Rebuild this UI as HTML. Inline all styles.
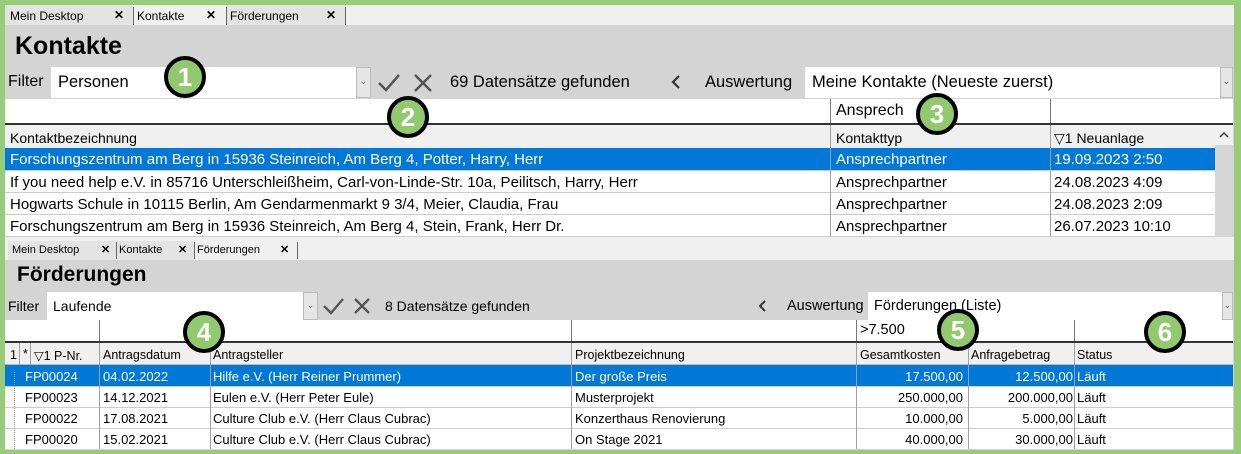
<!DOCTYPE html>
<html><head><meta charset="utf-8"><style>
*{margin:0;padding:0;box-sizing:border-box}
body{width:1241px;height:454px;overflow:hidden;background:#97cc78;font-family:"Liberation Sans",sans-serif;position:relative}
.a{position:absolute;white-space:nowrap}
.t{position:absolute;white-space:nowrap;color:#000}
.badge{position:absolute;width:42px;height:42px;border-radius:50%;background:#92c96f;border:4px solid #000;color:#fff;font-weight:bold;font-size:26px;line-height:34px;text-align:center}
</style></head><body>
<div class="a" style="left:5px;top:5px;width:1229px;height:444px;background:#d4d4d4"></div>
<div class="a" style="left:5px;top:5px;width:1229px;height:20px;background:#f0f0f0"></div>
<div class="a" style="left:5px;top:5px;width:128px;height:20px;background:#e3e3e3"></div>
<div class="a" style="left:226px;top:5px;width:119px;height:20px;background:#e3e3e3"></div>
<div class="a" style="left:133px;top:7px;width:1px;height:18px;background:#666"></div>
<div class="a" style="left:226px;top:7px;width:1px;height:18px;background:#666"></div>
<div class="a" style="left:345px;top:7px;width:1px;height:18px;background:#666"></div>
<div class="t" style="left:10px;top:9px;font-size:12px">Mein Desktop</div>
<div class="t" style="left:114px;top:8px;font-size:12px;font-weight:bold">✕</div>
<div class="t" style="left:137px;top:9px;font-size:12px">Kontakte</div>
<div class="t" style="left:206px;top:8px;font-size:12px;font-weight:bold">✕</div>
<div class="t" style="left:230px;top:9px;font-size:12px">Förderungen</div>
<div class="t" style="left:326px;top:8px;font-size:12px;font-weight:bold">✕</div>
<div class="t" style="left:15px;top:32px;font-size:25px;font-weight:bold">Kontakte</div>
<div class="t" style="left:8px;top:73px;font-size:16px">Filter</div>
<div class="a" style="left:51px;top:67px;width:306px;height:31px;background:#fff"></div>
<div class="t" style="left:58px;top:73px;font-size:16.5px">Personen</div>
<div class="a" style="left:356px;top:67px;width:15px;height:31px;background:#e5e5e5;border:1px solid #bbb;font-size:10px;color:#777;text-align:center;line-height:28px">⌄</div>
<svg class="a" style="left:377px;top:72px" width="60" height="22"><path d="M2 11 L9 18 L22 3" stroke="#555" stroke-width="2.5" fill="none"/><path d="M38 3 L54 19 M54 3 L38 19" stroke="#555" stroke-width="2.5"/></svg>
<div class="t" style="left:450px;top:73px;font-size:16.5px">69 Datensätze gefunden</div>
<svg class="a" style="left:670px;top:74px" width="12" height="16"><path d="M9 2 L3 8 L9 14" stroke="#333" stroke-width="2.2" fill="none"/></svg>
<div class="t" style="left:705px;top:73px;font-size:16.5px">Auswertung</div>
<div class="a" style="left:805px;top:67px;width:415px;height:31px;background:#fff"></div>
<div class="t" style="left:812px;top:73px;font-size:16.5px">Meine Kontakte (Neueste zuerst)</div>
<div class="a" style="left:1220px;top:67px;width:13px;height:31px;background:#e5e5e5;border:1px solid #bbb;font-size:10px;color:#777;text-align:center;line-height:28px">⌄</div>
<div class="a" style="left:5px;top:99px;width:1228px;height:24px;background:#fff"></div>
<div class="a" style="left:830px;top:99px;width:1px;height:24px;background:#777"></div>
<div class="a" style="left:1050px;top:99px;width:1px;height:24px;background:#777"></div>
<div class="t" style="left:836px;top:102px;font-size:16px">Ansprech</div>
<div class="a" style="left:5px;top:123px;width:1228px;height:2px;background:#333"></div>
<div class="a" style="left:5px;top:125px;width:1210px;height:24px;background:#f0f0f0;border-bottom:1px solid #bbb"></div>
<div class="a" style="left:830px;top:125px;width:1px;height:112px;background:#a0a0a0"></div>
<div class="a" style="left:1050px;top:125px;width:1px;height:112px;background:#a0a0a0"></div>
<div class="t" style="left:10px;top:130px;font-size:14px">Kontaktbezeichnung</div>
<div class="t" style="left:836px;top:130px;font-size:14px">Kontakttyp</div>
<div class="t" style="left:1054px;top:130px;font-size:14px">▽1 Neuanlage</div>
<div class="a" style="left:1215px;top:125px;width:18px;height:112px;background:#d6d6d6"></div>
<div class="a" style="left:1215px;top:125px;width:18px;height:20px;background:#f0f0f0"></div>
<svg class="a" style="left:1219px;top:131px" width="10" height="8"><path d="M1 6 L5 2 L9 6" stroke="#333" stroke-width="1.5" fill="none"/></svg>
<div class="a" style="left:5px;top:148px;width:1210px;height:88px;background:#fff"></div>
<div class="a" style="left:5px;top:148px;width:1210px;height:22px;background:#0078d7"></div>
<div class="a" style="left:5px;top:192px;width:1210px;height:1px;background:#ccc"></div>
<div class="a" style="left:5px;top:214px;width:1210px;height:1px;background:#ccc"></div>
<div class="a" style="left:5px;top:170px;width:1210px;height:1px;background:#ccc"></div>
<div class="a" style="left:5px;top:236px;width:1210px;height:1px;background:#ccc"></div>
<div class="a" style="left:830px;top:148px;width:1px;height:88px;background:#a0a0a0"></div>
<div class="a" style="left:1050px;top:148px;width:1px;height:88px;background:#a0a0a0"></div>
<div style="font-size:15px">
<div class="t" style="left:10px;top:151px;color:#fff">Forschungszentrum am Berg in 15936 Steinreich, Am Berg 4, Potter, Harry, Herr</div>
<div class="t" style="left:836px;top:151px;color:#fff">Ansprechpartner</div>
<div class="t" style="left:1054px;top:151px;color:#fff">19.09.2023 2:50</div>
<div class="t" style="left:10px;top:174px">If you need help e.V. in 85716 Unterschleißheim, Carl-von-Linde-Str. 10a, Peilitsch, Harry, Herr</div>
<div class="t" style="left:836px;top:174px">Ansprechpartner</div>
<div class="t" style="left:1054px;top:174px">24.08.2023 4:09</div>
<div class="t" style="left:10px;top:196px">Hogwarts Schule in 10115 Berlin, Am Gendarmenmarkt 9 3/4, Meier, Claudia, Frau</div>
<div class="t" style="left:836px;top:196px">Ansprechpartner</div>
<div class="t" style="left:1054px;top:196px">24.08.2023 2:09</div>
<div class="t" style="left:10px;top:218px">Forschungszentrum am Berg in 15936 Steinreich, Am Berg 4, Stein, Frank, Herr Dr.</div>
<div class="t" style="left:836px;top:218px">Ansprechpartner</div>
<div class="t" style="left:1054px;top:218px">26.07.2023 10:10</div>
</div>
<div class="a" style="left:5px;top:237px;width:1229px;height:25px;background:#f0f0f0"></div>
<div class="a" style="left:8px;top:241px;width:108px;height:19px;background:#e3e3e3"></div>
<div class="a" style="left:116px;top:241px;width:78px;height:19px;background:#e3e3e3"></div>
<div class="a" style="left:116px;top:242px;width:1px;height:17px;background:#666"></div>
<div class="a" style="left:194px;top:242px;width:1px;height:17px;background:#666"></div>
<div class="a" style="left:297px;top:242px;width:1px;height:17px;background:#666"></div>
<div class="t" style="left:12px;top:244px;font-size:11px">Mein Desktop</div>
<div class="t" style="left:101px;top:243px;font-size:11px;font-weight:bold">✕</div>
<div class="t" style="left:119px;top:244px;font-size:11px">Kontakte</div>
<div class="t" style="left:178px;top:243px;font-size:11px;font-weight:bold">✕</div>
<div class="t" style="left:197px;top:244px;font-size:11px">Förderungen</div>
<div class="t" style="left:280px;top:243px;font-size:11px;font-weight:bold">✕</div>
<div class="a" style="left:5px;top:260px;width:1229px;height:190px;background:#d4d4d4"></div>
<div class="t" style="left:17px;top:263px;font-size:21px;font-weight:bold">Förderungen</div>
<div class="t" style="left:8px;top:298px;font-size:14px">Filter</div>
<div class="a" style="left:47px;top:292px;width:257px;height:28px;background:#fff"></div>
<div class="t" style="left:53px;top:298px;font-size:14px">Laufende</div>
<div class="a" style="left:303px;top:292px;width:15px;height:28px;background:#e5e5e5;border:1px solid #bbb;font-size:9px;color:#777;text-align:center;line-height:24px">⌄</div>
<svg class="a" style="left:323px;top:296px" width="52" height="20"><path d="M1 10 L8 17 L20 3" stroke="#555" stroke-width="2.3" fill="none"/><path d="M32 3 L46 17 M46 3 L32 17" stroke="#555" stroke-width="2.3"/></svg>
<div class="t" style="left:385px;top:298px;font-size:14px">8 Datensätze gefunden</div>
<svg class="a" style="left:757px;top:299px" width="10" height="14"><path d="M8 2 L3 7 L8 12" stroke="#333" stroke-width="2" fill="none"/></svg>
<div class="t" style="left:787px;top:298px;font-size:14.5px">Auswertung</div>
<div class="a" style="left:868px;top:292px;width:355px;height:28px;background:#fff"></div>
<div class="t" style="left:874px;top:298px;font-size:14.5px">Förderungen (Liste)</div>
<div class="a" style="left:1222px;top:292px;width:11px;height:28px;background:#e5e5e5;border:1px solid #bbb;font-size:9px;color:#777;text-align:center;line-height:24px">⌄</div>
<div class="a" style="left:5px;top:320px;width:1228px;height:21px;background:#fff"></div>
<div class="a" style="left:99px;top:320px;width:1px;height:21px;background:#777"></div>
<div class="a" style="left:571px;top:320px;width:1px;height:21px;background:#777"></div>
<div class="a" style="left:856px;top:320px;width:1px;height:21px;background:#777"></div>
<div class="a" style="left:1074px;top:320px;width:1px;height:21px;background:#777"></div>
<div class="t" style="left:860px;top:322px;font-size:14.5px">&gt;7.500</div>
<div class="a" style="left:5px;top:341px;width:1228px;height:2px;background:#333"></div>
<div class="a" style="left:5px;top:343px;width:1228px;height:22px;background:#f0f0f0;border-bottom:1px solid #bbb"></div>
<div class="a" style="left:5px;top:365px;width:1228px;height:84px;background:#fff"></div>
<div class="a" style="left:5px;top:365px;width:1228px;height:21px;background:#0078d7"></div>
<div class="a" style="left:5px;top:386px;width:1228px;height:1px;background:#ccc"></div>
<div class="a" style="left:5px;top:407px;width:1228px;height:1px;background:#ccc"></div>
<div class="a" style="left:5px;top:428px;width:1228px;height:1px;background:#ccc"></div>
<div class="a" style="left:19px;top:343px;width:1px;height:22px;background:#a0a0a0"></div>
<div class="a" style="left:30px;top:343px;width:1px;height:22px;background:#a0a0a0"></div>
<div class="a" style="left:99px;top:343px;width:1px;height:106px;background:#a0a0a0"></div>
<div class="a" style="left:210px;top:343px;width:1px;height:106px;background:#a0a0a0"></div>
<div class="a" style="left:571px;top:343px;width:1px;height:106px;background:#a0a0a0"></div>
<div class="a" style="left:856px;top:343px;width:1px;height:106px;background:#a0a0a0"></div>
<div class="a" style="left:968px;top:343px;width:1px;height:106px;background:#a0a0a0"></div>
<div class="a" style="left:1074px;top:343px;width:1px;height:106px;background:#a0a0a0"></div>
<div class="a" style="left:14px;top:372px;width:0;height:77px;border-left:1px dotted #999"></div>
<div style="font-size:12.5px">
<div class="t" style="left:10px;top:348px">1</div>
<div class="t" style="left:23px;top:347px">*</div>
<div class="t" style="left:34px;top:348px">▽1 P-Nr.</div>
<div class="t" style="left:103px;top:348px">Antragsdatum</div>
<div class="t" style="left:213px;top:348px">Antragsteller</div>
<div class="t" style="left:575px;top:348px">Projektbezeichnung</div>
<div class="t" style="left:860px;top:348px">Gesamtkosten</div>
<div class="t" style="left:971px;top:348px">Anfragebetrag</div>
<div class="t" style="left:1077px;top:348px">Status</div>
</div>
<div style="font-size:13px">
<div class="t" style="left:25px;top:369px;color:#fff">FP00024</div><div class="t" style="left:103px;top:369px;color:#fff">04.02.2022</div><div class="t" style="left:213px;top:369px;color:#fff">Hilfe e.V. (Herr Reiner Prummer)</div><div class="t" style="left:575px;top:369px;color:#fff">Der große Preis</div><div class="t" style="right:278px;top:369px;color:#fff">17.500,00</div><div class="t" style="right:168px;top:369px;color:#fff">12.500,00</div><div class="t" style="left:1077px;top:369px;color:#fff">Läuft</div>
<div class="t" style="left:25px;top:390px">FP00023</div><div class="t" style="left:103px;top:390px">14.12.2021</div><div class="t" style="left:213px;top:390px">Eulen e.V. (Herr Peter Eule)</div><div class="t" style="left:575px;top:390px">Musterprojekt</div><div class="t" style="right:278px;top:390px">250.000,00</div><div class="t" style="right:168px;top:390px">200.000,00</div><div class="t" style="left:1077px;top:390px">Läuft</div>
<div class="t" style="left:25px;top:411px">FP00022</div><div class="t" style="left:103px;top:411px">17.08.2021</div><div class="t" style="left:213px;top:411px">Culture Club e.V. (Herr Claus Cubrac)</div><div class="t" style="left:575px;top:411px">Konzerthaus Renovierung</div><div class="t" style="right:278px;top:411px">10.000,00</div><div class="t" style="right:168px;top:411px">5.000,00</div><div class="t" style="left:1077px;top:411px">Läuft</div>
<div class="t" style="left:25px;top:432px">FP00020</div><div class="t" style="left:103px;top:432px">15.02.2021</div><div class="t" style="left:213px;top:432px">Culture Club e.V. (Herr Claus Cubrac)</div><div class="t" style="left:575px;top:432px">On Stage 2021</div><div class="t" style="right:278px;top:432px">40.000,00</div><div class="t" style="right:168px;top:432px">30.000,00</div><div class="t" style="left:1077px;top:432px">Läuft</div>
</div>
<div class="badge" style="left:164px;top:56px">1</div>
<div class="badge" style="left:387px;top:96px">2</div>
<div class="badge" style="left:916px;top:93px">3</div>
<div class="badge" style="left:183px;top:311px">4</div>
<div class="badge" style="left:937px;top:309px">5</div>
<div class="badge" style="left:1144px;top:311px">6</div>
</body></html>
